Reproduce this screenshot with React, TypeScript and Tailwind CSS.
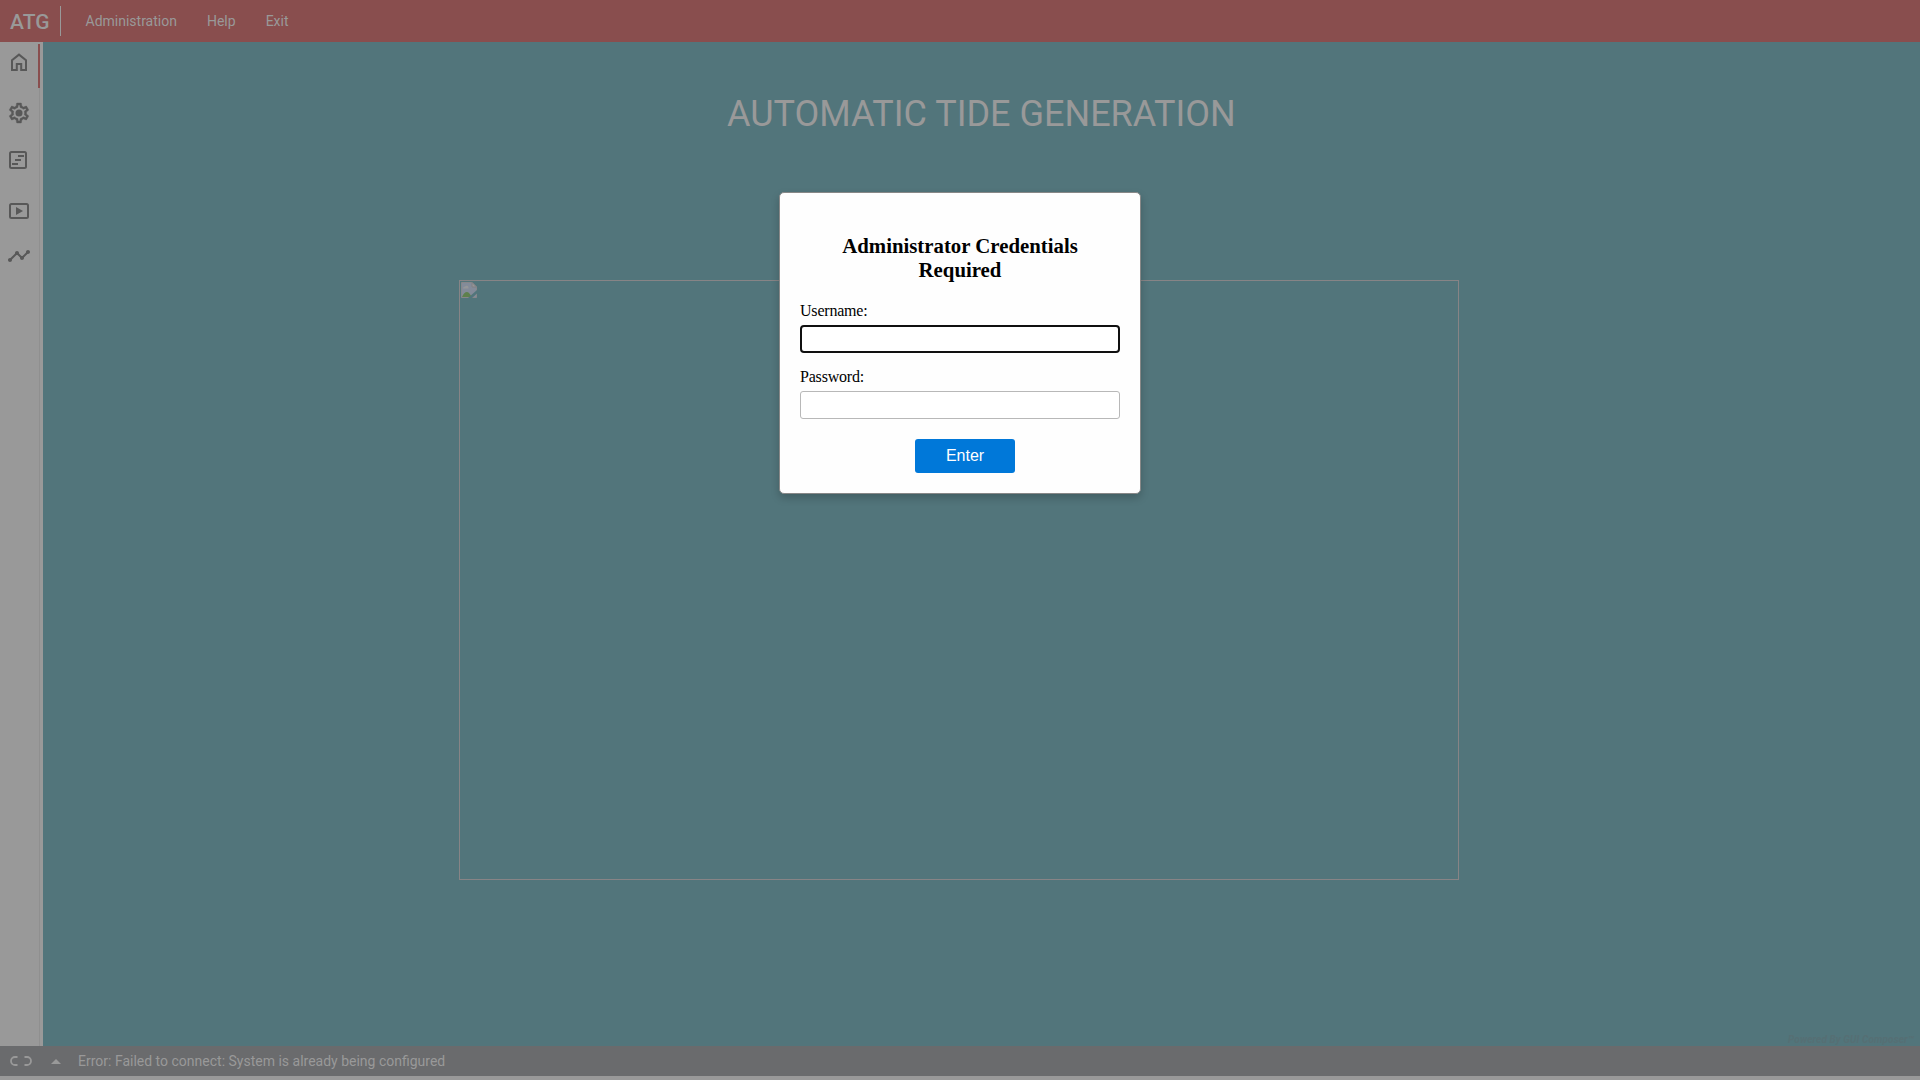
import React from "react";

function HomeIcon() {
  return (
    <svg width="18" height="19" viewBox="0 0 18 19" fill="none" stroke="#585858" strokeWidth="2">
      <path d="M2 17V7.2L9 1.6L16 7.2V17H11.2V11H6.8V17Z" />
    </svg>
  );
}

function GearIcon() {
  return (
    <svg width="24" height="24" viewBox="0 0 24 24" fill="#585858">
      <path stroke="#585858" strokeWidth="0.4" d="M19.43 12.98c.04-.32.07-.64.07-.98 0-.34-.03-.66-.07-.98l2.11-1.65c.19-.15.24-.42.12-.64l-2-3.46c-.09-.16-.26-.25-.44-.25-.06 0-.12.01-.17.03l-2.49 1c-.52-.4-1.08-.73-1.69-.98l-.38-2.65C14.46 2.18 14.25 2 14 2h-4c-.25 0-.46.18-.49.42l-.38 2.65c-.61.25-1.17.59-1.69.98l-2.49-1c-.06-.02-.12-.03-.18-.03-.17 0-.34.09-.43.25l-2 3.46c-.13.22-.07.49.12.64l2.11 1.65c-.04.32-.07.65-.07.98 0 .33.03.66.07.98l-2.11 1.65c-.19.15-.24.42-.12.64l2 3.46c.09.16.26.25.44.25.06 0 .12-.01.17-.03l2.49-1c.52.4 1.08.73 1.69.98l.38 2.65c.03.24.24.42.49.42h4c.25 0 .46-.18.49-.42l.38-2.65c.61-.25 1.17-.59 1.69-.98l2.49 1c.06.02.12.03.18.03.17 0 .34-.09.43-.25l2-3.46c.12-.22.07-.49-.12-.64l-2.11-1.65zm-1.98-1.71c.04.31.05.52.05.73 0 .21-.02.43-.05.73l-.14 1.13.89.7 1.08.84-.7 1.21-1.27-.51-1.04-.42-.9.68c-.43.32-.84.56-1.25.73l-1.06.43-.16 1.13-.2 1.35h-1.4l-.19-1.35-.16-1.13-1.06-.43c-.43-.18-.83-.41-1.23-.71l-.91-.7-1.06.43-1.27.51-.7-1.21 1.08-.84.89-.7-.14-1.13c-.03-.31-.05-.54-.05-.74s.02-.43.05-.73l.14-1.13-.89-.7-1.08-.84.7-1.21 1.27.51 1.04.42.9-.68c.43-.32.84-.56 1.25-.73l1.06-.43.16-1.13.2-1.35h1.39l.19 1.35.16 1.13 1.06.43c.43.18.83.41 1.23.71l.91.7 1.06-.43 1.27-.51.7 1.21-1.07.85-.89.7.14 1.13z" />
      <circle cx="12" cy="12" r="3.5" />
    </svg>
  );
}

function FormIcon() {
  return (
    <svg width="18" height="18" viewBox="0 0 18 18" fill="none" stroke="#585858" strokeWidth="2">
      <rect x="1" y="1" width="16" height="16" rx="1.5" />
      <path d="M9 5H15M6 9H12M3 13H9" />
    </svg>
  );
}

function PlayIcon() {
  return (
    <svg width="20" height="16" viewBox="0 0 20 16" fill="none" stroke="#585858" strokeWidth="2">
      <rect x="1" y="1" width="18" height="14" rx="1.5" />
      <path d="M7 4V12L14 8Z" fill="#585858" stroke="none" />
    </svg>
  );
}

function TimelineIcon() {
  return (
    <svg width="24" height="24" viewBox="0 0 24 24" fill="#585858">
      <path d="M23 8c0 1.1-.9 2-2 2-.18 0-.35-.02-.51-.07l-3.56 3.55c.05.16.07.34.07.52 0 1.100-.9 2-2 2s-2-.9-2-2c0-.18.02-.36.07-.52l-2.550-2.550c-.16.05-.34.07-.52.07s-.36-.02-.52-.07l-4.550 4.560c.05.16.07.33.07.51 0 1.100-.9 2-2 2s-2-.9-2-2 .9-2 2-2c.18 0 .35.02.51.07l4.560-4.550C8.020 9.360 8 9.180 8 9c0-1.100.9-2 2-2s2 .9 2 2c0 .18-.02.36-.07.52l2.550 2.550c.16-.05.34-.07.52-.07s.36.02.52.07l3.550-3.560C19.020 8.350 19 8.180 19 8c0-1.100.9-2 2-2s2 .9 2 2z" />
    </svg>
  );
}

function LinkIcon() {
  return (
    <svg width="22" height="10" viewBox="0 0 22 10" fill="none" stroke="#999999" strokeWidth="1.8">
      <path d="M7.500 1H5a4 4 0 0 0 0 8H7.500M14.500 1h2.500a4 4 0 0 1 0 8h-2.500" />
    </svg>
  );
}

function BrokenImageIcon() {
  return (
    <svg width="16" height="16" viewBox="0 0 16 16">
      <path d="M.5.5H11L15.500 5V15.500H.5Z" fill="#838b99" stroke="#87878a" />
      <path d="M2 6.500a2 2 0 0 1 2-2 2 2 0 0 1 3.500 1v1Z" fill="#959799" />
      <path d="M1 15C3 10 6 9 8 11L11 15Z" fill="#5e804d" />
      <path d="M11 .5V5H15.500Z" fill="#969698" stroke="#808083" />
      <path d="M7 16L16 8V11.500L11 16Z" fill="#52757b" />
    </svg>
  );
}

function Header() {
  return (
    <header className="flex h-[42px] shrink-0 items-center bg-[#894e4e] text-[#999999]">
      <div className="w-[60px] pt-[2px] pl-[10px] text-[21px] leading-6 font-medium">ATG</div>
      <div className="h-[30px] w-px bg-[#999999]" />
      <nav className="flex gap-[30px] pl-[24.500px] text-sm">
        <span>Administration</span>
        <span>Help</span>
        <span>Exit</span>
      </nav>
    </header>
  );
}

function Sidebar() {
  return (
    <aside className="flex w-[43px] shrink-0 bg-[#999999]">
      <div className="flex w-[38px] flex-col items-center">
        <div className="mt-[11px] h-[19px]"><HomeIcon /></div>
        <div className="mt-[29px] h-6"><GearIcon /></div>
        <div className="mt-[26px] mr-[2px] h-[18px]"><FormIcon /></div>
        <div className="mt-[34px] h-4"><PlayIcon /></div>
        <div className="mt-[25px] h-6"><TimelineIcon /></div>
      </div>
      <div className="flex w-[2px] flex-col items-end">
        <div className="mt-[2px] h-11 w-[2px] bg-[#894e4e]" />
        <div className="w-px flex-1 bg-[#8f8f8f]" />
      </div>
    </aside>
  );
}

function CredentialsDialog() {
  return (
    <div
      role="dialog"
      className="absolute top-[192px] left-[779px] flex h-[302px] w-[362px] flex-col rounded-[5px] border border-[#888888] bg-[#fefefe] px-5 font-['Liberation_Serif',serif] text-black shadow-[0_4px_8px_rgba(0,0,0,0.2)]"
    >
      <h3 className="mt-[41px] text-center text-[20.8px] leading-6 font-bold">
        Administrator Credentials
        <br />
        Required
      </h3>
      <label className="mt-5 text-base leading-[18px] tracking-[-0.2px]">Username:</label>
      <input className="mt-[5px] h-7 rounded-[4px] border-2 border-[#101010] bg-white outline-none" />
      <label className="mt-[15px] text-base leading-[18px] tracking-[-0.2px]">Password:</label>
      <input type="password" className="mt-[5px] h-7 rounded-[3px] border border-[#b8b8b8] bg-white outline-none" />
      <button className="mt-5 ml-[115px] h-[34px] w-[100px] rounded-[3px] bg-[#0078d9] font-['Liberation_Sans',sans-serif] text-base leading-[34px] text-white">
        Enter
      </button>
    </div>
  );
}

export default function App() {
  return (
    <div className="relative flex h-[1080px] w-[1920px] flex-col overflow-hidden bg-[#999999] font-[Roboto,sans-serif]">
      <Header />
      <div className="flex min-h-0 flex-1">
        <Sidebar />
        <main className="relative flex-1 bg-[#52757b]">
          <h1 className="pt-[51px] pl-[684px] text-[36px] leading-[42px] whitespace-nowrap text-[#999999]">
            AUTOMATIC TIDE GENERATION
          </h1>
          <div className="mt-[145px] ml-[416px] h-[600px] w-[1000px] border border-[#878486] p-px">
            <BrokenImageIcon />
          </div>
          <div className="absolute right-[6px] bottom-0 text-[10px] leading-3 font-bold tracking-[0.1px] text-[#566f74] italic">
            Powered By GUI Composer™
          </div>
        </main>
      </div>
      <footer className="flex h-[30px] shrink-0 items-center bg-[#6a6b6d] pl-[10px] text-sm text-[#999999]">
        <LinkIcon />
        <svg className="ml-[19px]" width="10" height="5" viewBox="0 0 10 5">
          <path d="M0 5L5 0L10 5Z" fill="#999999" />
        </svg>
        <span className="ml-[17px]">Error: Failed to connect: System is already being configured</span>
      </footer>
      <div className="h-1 shrink-0 bg-[#999999]" />
      <CredentialsDialog />
    </div>
  );
}
